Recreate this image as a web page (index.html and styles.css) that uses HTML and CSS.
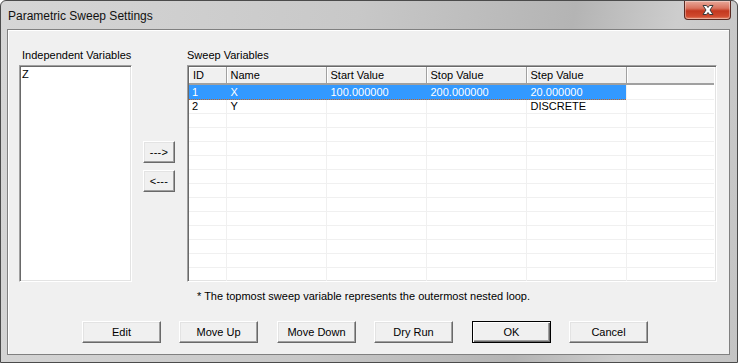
FILE: index.html
```html
<!DOCTYPE html>
<html lang="en">
<head>
    <meta charset="UTF-8" />
    <title>Parametric Sweep Settings</title>
    <link rel="stylesheet" href="styles.css">
</head>
<body>
    <div class="window">
        <div class="titlebar">
            <span class="title">Parametric Sweep Settings</span>
            <a href="javascript:;" class="close">
                <svg width="20" height="12" viewBox="0 0 20 12">
                    <path d="M5 1.5h3.5l1.5 2 1.5-2H15l-3 4.5 3 4.5h-3.5L10 8.5 8.5 10.5H5l3-4.5z" fill="#fff" stroke="#3a3a3a" stroke-width="1" stroke-linejoin="round"/>
                </svg>
            </a>
        </div>
        <div class="client">
            <div class="main">
                <div class="col-left">
                    <div class="label">Independent Variables</div>
                    <div class="listbox">
                        <div class="item">Z</div>
                    </div>
                </div>
                <div class="col-mid">
                    <a href="javascript:;" class="btn small">---&gt;</a>
                    <a href="javascript:;" class="btn small">&lt;---</a>
                </div>
                <div class="col-right">
                    <div class="label">Sweep Variables</div>
                    <div class="grid">
                        <table>
                            <colgroup>
                                <col class="c-id"><col class="c-val"><col class="c-val"><col class="c-val"><col class="c-val"><col>
                            </colgroup>
                            <thead>
                                <tr><th>ID</th><th>Name</th><th>Start Value</th><th>Stop Value</th><th>Step Value</th><th></th></tr>
                            </thead>
                            <tbody>
                                <tr class="sel"><td>1</td><td>X</td><td>100.000000</td><td>200.000000</td><td>20.000000</td><td class="fill"></td></tr>
                                <tr><td>2</td><td>Y</td><td></td><td></td><td>DISCRETE</td><td></td></tr>
                                <tr><td></td><td></td><td></td><td></td><td></td><td></td></tr>
                                <tr><td></td><td></td><td></td><td></td><td></td><td></td></tr>
                                <tr><td></td><td></td><td></td><td></td><td></td><td></td></tr>
                                <tr><td></td><td></td><td></td><td></td><td></td><td></td></tr>
                                <tr><td></td><td></td><td></td><td></td><td></td><td></td></tr>
                                <tr><td></td><td></td><td></td><td></td><td></td><td></td></tr>
                                <tr><td></td><td></td><td></td><td></td><td></td><td></td></tr>
                                <tr><td></td><td></td><td></td><td></td><td></td><td></td></tr>
                                <tr><td></td><td></td><td></td><td></td><td></td><td></td></tr>
                                <tr><td></td><td></td><td></td><td></td><td></td><td></td></tr>
                                <tr><td></td><td></td><td></td><td></td><td></td><td></td></tr>
                                <tr><td></td><td></td><td></td><td></td><td></td><td></td></tr>
                            </tbody>
                        </table>
                    </div>
                    <div class="note">* The topmost sweep variable represents the outermost nested loop.</div>
                </div>
            </div>
            <div class="buttons">
                <a href="javascript:;" class="btn">Edit</a>
                <a href="javascript:;" class="btn">Move Up</a>
                <a href="javascript:;" class="btn">Move Down</a>
                <a href="javascript:;" class="btn">Dry Run</a>
                <a href="javascript:;" class="btn default">OK</a>
                <a href="javascript:;" class="btn">Cancel</a>
            </div>
        </div>
    </div>
</body>
</html>
```
FILE: styles.css
```css
body{
    margin: 0;
    width: 738px;
    height: 363px;
    overflow: hidden;
    font-family: "Liberation Sans", Arial, sans-serif;
    font-size: 11px;
    color: #000;
    background: #fff;
}
a{
    text-decoration: none;
    color: #000;
}
.window{
    box-sizing: border-box;
    width: 738px;
    height: 363px;
    border: 1px solid #4b4b4b;
    border-radius: 6px 6px 0 0;
    padding: 0 7px 7px 6px;
    background: linear-gradient(100deg, #d6d6d6 0%, #c8c8c8 45%, #b4b4b4 72%, #cdcdcd 85%, #c4c4c4 100%);
    display: flex;
    flex-direction: column;
}
.titlebar{
    height: 28px;
    display: flex;
    align-items: flex-start;
}
.title{
    font-size: 12px;
    margin: 8px 0 0 1px;
    color: #111;
}
.close{
    margin-left: auto;
    margin-right: -1px;
    width: 45px;
    height: 18px;
    border: 1px solid #5a2a22;
    border-top: 0;
    border-radius: 0 0 4px 4px;
    background: linear-gradient(#e8a99a 0%, #d9735e 40%, #c3381f 55%, #d04a2e 85%, #e58a6c 100%);
    display: flex;
    align-items: center;
    justify-content: center;
    box-shadow: inset 0 0 0 1px rgba(255,255,255,.35);
}
.client{
    flex: 1;
    background: #f0f0f0;
    border: 1px solid #808080;
    box-shadow: inset 1px 1px 0 #fff;
    padding: 19px 0 0 11px;
}
.main{
    display: flex;
    align-items: flex-start;
}
.label{
    height: 16px;
    line-height: 13px;
    padding-left: 3px;
}
.col-left{
    width: 113px;
}
.listbox{
    box-sizing: border-box;
    height: 217px;
    background: #fff;
    border: 1px solid;
    border-color: #a0a0a0 #fff #fff #a0a0a0;
    box-shadow: inset 1px 1px 0 #696969, inset -1px -1px 0 #e3e3e3;
    padding: 2px 0 0 2px;
}
.item{
    line-height: 13px;
}
.col-mid{
    width: 32px;
    margin: 92px 12px 0 11px;
    display: flex;
    flex-direction: column;
    gap: 7px;
}
.col-right{
    width: 530px;
}
.col-right .label{
    padding-left: 0;
}
.btn{
    box-sizing: border-box;
    display: flex;
    align-items: center;
    justify-content: center;
    width: 79px;
    height: 22px;
    background: #f0f0f0;
    border: 1px solid;
    border-color: #fff #696969 #696969 #fff;
    box-shadow: inset -1px -1px 0 #a0a0a0, inset 1px 1px 0 #e3e3e3;
    padding-bottom: 1px;
}
.btn.small{
    width: 32px;
    letter-spacing: .3px;
}
.btn.default{
    border-color: #000;
    box-shadow: inset 1px 1px 0 #fff, inset -1px -1px 0 #696969, inset -2px -2px 0 #a0a0a0;
}
.grid{
    box-sizing: border-box;
    height: 217px;
    background: #fff;
    border: 1px solid;
    border-color: #a0a0a0 #fff #fff #a0a0a0;
    box-shadow: inset 1px 1px 0 #696969, inset -1px -1px 0 #e3e3e3;
    padding: 1px 2px 2px 1px;
    overflow: hidden;
}
table{
    width: 100%;
    table-layout: fixed;
    border-collapse: collapse;
}
.c-id{
    width: 37px;
}
.c-val{
    width: 100px;
}
th{
    height: 16px;
    padding: 0 0 0 4px;
    text-align: left;
    font-weight: normal;
    background: #f0f0f0;
    border-right: 1px solid #a0a0a0;
    border-bottom: 2px solid #a0a0a0;
    box-shadow: inset 1px 1px 0 #fff;
    line-height: 15px;
}
th:last-child{
    border-right: 0;
}
td{
    height: 13px;
    padding: 0 0 0 4px;
    border-right: 1px solid #f0f0f0;
    border-bottom: 1px solid #f0f0f0;
    line-height: 13px;
    white-space: nowrap;
}
td:first-child{
    padding-left: 3px;
}
td:last-child{
    border-right: 0;
}
tbody tr:first-child td{
    height: 14px;
}
tr.sel td{
    background: #3399ff;
    color: #fff;
    border-top: 1px dotted #c9641c;
    border-bottom: 1px dotted #c9641c;
    border-right-color: #3399ff;
}
tr.sel td:nth-child(5){
    border-right: 1px solid #f0f0f0;
}
tr.sel td.fill{
    background: #fff;
    border-top: 0;
    border-bottom: 1px solid #f0f0f0;
}
.note{
    margin: 7px 0 0 10px;
    line-height: 14px;
}
.buttons{
    display: flex;
    gap: 18px;
    margin: 18px 0 0 63px;
}
.buttons .btn:nth-child(3),
.buttons .btn:nth-child(5){
    margin-left: 1px;
}
```
